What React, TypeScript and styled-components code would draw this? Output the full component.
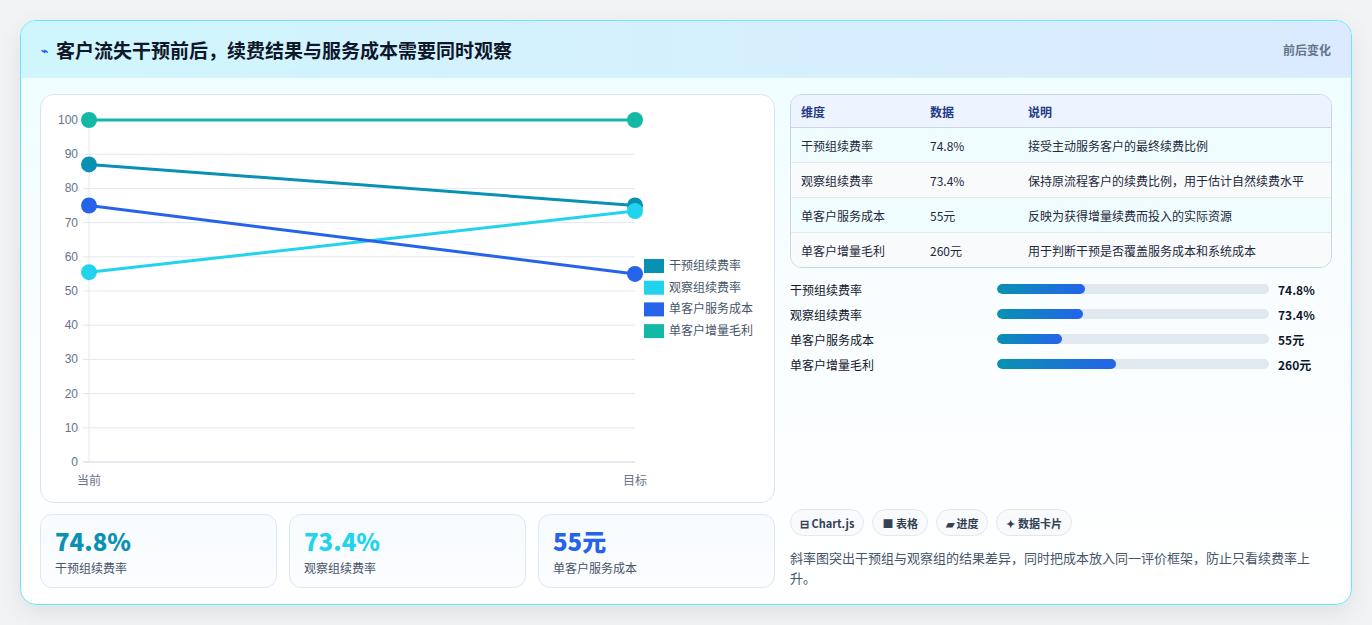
import React from 'react';
import styled, { createGlobalStyle } from 'styled-components';

const GlobalStyle = createGlobalStyle`
  body {
    margin: 0;
    background: #f1f3f5;
    font-family: "Noto Sans CJK SC", "Noto Sans", sans-serif;
  }
`;

const Page = styled.div`
  padding: 20px;
  height: 625px;
  box-sizing: border-box;
`;

const Card = styled.div`
  height: 585px;
  box-sizing: border-box;
  border: 1px solid #67e8f9;
  border-radius: 16px;
  background: linear-gradient(180deg, #ecfeff 0%, #f8fdff 40%, #ffffff 100%);
  box-shadow: 0 8px 24px rgba(15, 23, 42, 0.08);
  overflow: hidden;
  display: flex;
  flex-direction: column;
`;

const Header = styled.div`
  height: 56px;
  flex: none;
  display: flex;
  align-items: center;
  justify-content: space-between;
  padding: 0 20px;
  background: linear-gradient(90deg, #cff6fd 0%, #dbeafe 100%);
  border-bottom: 1px solid #d9f3fa;
`;

const Title = styled.h1`
  margin: 0;
  font-size: 19px;
  font-weight: 700;
  color: #0f172a;
  display: flex;
  align-items: center;
  gap: 8px;
`;

const Bolt = styled.span`
  color: #2563eb;
  font-size: 12px;
`;

const Tag = styled.span`
  font-size: 12px;
  font-weight: 700;
  color: #64748b;
`;

const Body = styled.div`
  flex: 1;
  display: grid;
  grid-template-columns: 735px 1fr;
  gap: 15px;
  padding: 16px 19px 18px 19px;
`;

const LeftCol = styled.div`
  display: flex;
  flex-direction: column;
  gap: 11px;
`;

const ChartBox = styled.div`
  height: 409px;
  box-sizing: border-box;
  background: #fff;
  border: 1px solid #dbe4ee;
  border-radius: 14px;
  position: relative;
`;

const Stats = styled.div`
  display: grid;
  grid-template-columns: repeat(3, 1fr);
  gap: 12px;
`;

const Stat = styled.div`
  height: 74px;
  box-sizing: border-box;
  border: 1px solid #dbe7fb;
  border-radius: 12px;
  background: linear-gradient(180deg, #f8fbff, #fbfdff);
  padding: 10px 14px;
`;

const StatValue = styled.div<{ $color: string }>`
  font-size: 24px;
  font-weight: 800;
  color: ${(p) => p.$color};
  line-height: 32px;
`;

const StatLabel = styled.div`
  font-size: 12px;
  color: #475569;
  margin-top: 2px;
`;

const RightCol = styled.div`
  display: flex;
  flex-direction: column;
`;

const Table = styled.table`
  width: 100%;
  border-collapse: separate;
  border-spacing: 0;
  border: 1px solid #cbd5e1;
  border-radius: 12px;
  overflow: hidden;
  font-size: 12px;
  color: #1e293b;
`;

const Th = styled.th`
  text-align: left;
  font-weight: 700;
  color: #1e3a8a;
  background: #eef4ff;
  height: 32px;
  padding: 0 10px;
  border-bottom: 1px solid #cbd5e1;
`;

const Tr = styled.tr<{ $alt: boolean }>`
  background: ${(p) => (p.$alt ? '#f8fafc' : '#f0fdff')};
`;

const Td = styled.td<{ $last: boolean }>`
  height: 34px;
  padding: 0 10px;
  border-bottom: ${(p) => (p.$last ? 'none' : '1px solid #e2e8f0')};
`;

const Bars = styled.div`
  display: flex;
  flex-direction: column;
  gap: 7px;
  margin-top: 12px;
`;

const BarRow = styled.div`
  display: grid;
  grid-template-columns: 198px 272px 1fr;
  align-items: center;
  gap: 9px;
  height: 18px;
  font-size: 12px;
  color: #0f172a;
`;

const Track = styled.div`
  height: 10px;
  border-radius: 5px;
  background: #e2e8f0;
  overflow: hidden;
`;

const Fill = styled.div`
  height: 100%;
  border-radius: 5px;
  background: linear-gradient(90deg, #0891b2, #2563eb);
`;

const BarValue = styled.span`
  font-weight: 700;
`;

const Chips = styled.div`
  margin-top: auto;
  display: flex;
  gap: 8px;
`;

const Chip = styled.span`
  height: 27px;
  box-sizing: border-box;
  padding: 0 9px;
  border: 1px solid #e2e8f0;
  border-radius: 14px;
  background: #f8fafc;
  display: flex;
  align-items: center;
  gap: 4px;
  font-size: 11px;
  font-weight: 700;
  color: #334155;
`;

const Note = styled.p`
  margin: 12px 0 0;
  font-size: 13px;
  line-height: 20px;
  color: #475569;
  padding-right: 20px;
`;

const series = [
  { name: '干预组续费率', color: '#0891b2', a: 87, b: 75 },
  { name: '观察组续费率', color: '#22d3ee', a: 55.5, b: 73.4 },
  { name: '单客户服务成本', color: '#2563eb', a: 75, b: 55 },
  { name: '单客户增量毛利', color: '#14b8a6', a: 100, b: 100 },
];

const rows = [
  ['干预组续费率', '74.8%', '接受主动服务客户的最终续费比例'],
  ['观察组续费率', '73.4%', '保持原流程客户的续费比例，用于估计自然续费水平'],
  ['单客户服务成本', '55元', '反映为获得增量续费而投入的实际资源'],
  ['单客户增量毛利', '260元', '用于判断干预是否覆盖服务成本和系统成本'],
];

const bars = [
  ['干预组续费率', 32.4, '74.8%'],
  ['观察组续费率', 31.8, '73.4%'],
  ['单客户服务成本', 23.8, '55元'],
  ['单客户增量毛利', 43.7, '260元'],
] as const;

// chart coords relative to ChartBox (box origin at 40,92)
const X0 = 48;
const X1 = 594;
const yOf = (v: number) => 367 - v * 3.42;

function SlopeChart() {
  const ticks = [0, 10, 20, 30, 40, 50, 60, 70, 80, 90, 100];
  return (
    <svg width="733" height="407" style={{ display: 'block' }}>
      {ticks.map((t) => (
        <g key={t}>
          <line x1={X0 - 6} x2={X1} y1={yOf(t)} y2={yOf(t)} stroke={t === 0 ? '#cbd5e1' : '#e2e8f0'} />
          <text x={X0 - 11} y={yOf(t) + 4} textAnchor="end" fontSize="12" fill="#64748b" fontFamily="Liberation Sans, sans-serif">
            {t}
          </text>
        </g>
      ))}
      <line x1={X0} x2={X0} y1={yOf(100)} y2={yOf(0)} stroke="#e2e8f0" />
      <text x={X0} y={390} textAnchor="middle" fontSize="12" fill="#64748b">当前</text>
      <text x={X1} y={390} textAnchor="middle" fontSize="12" fill="#64748b">目标</text>
      {series.map((s) => (
        <g key={s.name}>
          <line x1={X0} y1={yOf(s.a)} x2={X1} y2={yOf(s.b)} stroke={s.color} strokeWidth="3" />
          <circle cx={X0} cy={yOf(s.a)} r="8" fill={s.color} />
          <circle cx={X1} cy={yOf(s.b)} r="8" fill={s.color} />
        </g>
      ))}
      {series.map((s, i) => (
        <g key={s.name + 'l'}>
          <rect x={603} y={164 + i * 21.7} width={20} height={14} fill={s.color} />
          <text x={628} y={175 + i * 21.7} fontSize="12" fill="#475569">{s.name}</text>
        </g>
      ))}
    </svg>
  );
}

export default function App() {
  return (
    <Page>
      <GlobalStyle />
      <Card>
        <Header>
          <Title>
            <Bolt>⌁</Bolt>客户流失干预前后，续费结果与服务成本需要同时观察
          </Title>
          <Tag>前后变化</Tag>
        </Header>
        <Body>
          <LeftCol>
            <ChartBox>
              <SlopeChart />
            </ChartBox>
            <Stats>
              <Stat>
                <StatValue $color="#0891b2">74.8%</StatValue>
                <StatLabel>干预组续费率</StatLabel>
              </Stat>
              <Stat>
                <StatValue $color="#22d3ee">73.4%</StatValue>
                <StatLabel>观察组续费率</StatLabel>
              </Stat>
              <Stat>
                <StatValue $color="#2563eb">55元</StatValue>
                <StatLabel>单客户服务成本</StatLabel>
              </Stat>
            </Stats>
          </LeftCol>
          <RightCol>
            <Table>
              <colgroup>
                <col style={{ width: 129 }} />
                <col style={{ width: 98 }} />
                <col />
              </colgroup>
              <thead>
                <tr>
                  <Th>维度</Th>
                  <Th>数据</Th>
                  <Th>说明</Th>
                </tr>
              </thead>
              <tbody>
                {rows.map((r, i) => (
                  <Tr key={r[0]} $alt={i % 2 === 1}>
                    {r.map((c) => (
                      <Td key={c} $last={i === rows.length - 1}>{c}</Td>
                    ))}
                  </Tr>
                ))}
              </tbody>
            </Table>
            <Bars>
              {bars.map(([label, pct, val]) => (
                <BarRow key={label}>
                  <span>{label}</span>
                  <Track>
                    <Fill style={{ width: `${pct}%` }} />
                  </Track>
                  <BarValue>{val}</BarValue>
                </BarRow>
              ))}
            </Bars>
            <Chips>
              <Chip>⊟ Chart.js</Chip>
              <Chip>■ 表格</Chip>
              <Chip>▰ 进度</Chip>
              <Chip>✦ 数据卡片</Chip>
            </Chips>
            <Note>斜率图突出干预组与观察组的结果差异，同时把成本放入同一评价框架，防止只看续费率上升。</Note>
          </RightCol>
        </Body>
      </Card>
    </Page>
  );
}
